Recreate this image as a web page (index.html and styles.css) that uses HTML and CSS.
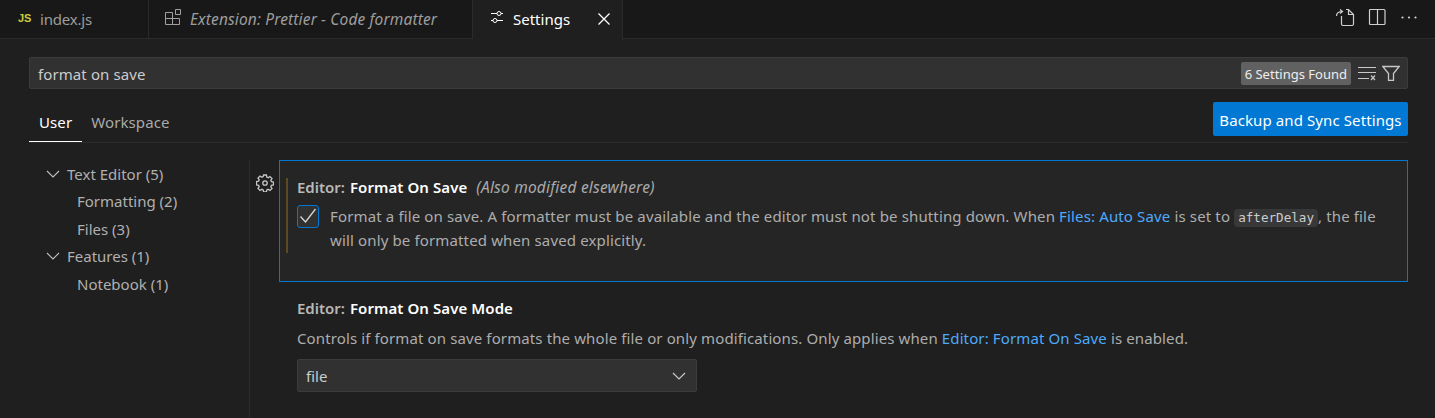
FILE: index.html
```html
<!DOCTYPE html>
<html lang="en">
<head>
<meta charset="utf-8">
<title>Settings</title>
<link rel="stylesheet" href="styles.css">
</head>
<body>
<header class="tabbar">
  <div class="tab tab-js"><span class="js-icon">JS</span><span class="tab-label">index.js</span></div>
  <div class="tab tab-ext">
    <svg class="ic16" viewBox="0 0 16 16" fill="none" stroke="#a0a0a0" stroke-width="1"><path d="M.5 1.500h7v12h-7zM.5 7.500h14v6h-7M10.500-1.500h5v5h-5z"/></svg>
    <span class="tab-label italic">Extension: Prettier - Code formatter</span>
  </div>
  <div class="tab tab-active">
    <svg class="ic16" viewBox="0 0 16 16" fill="none" stroke="#fff" stroke-width="1"><path d="M1 2.500h6M11 2.500h2M1 9.500h2M7 9.500h6"/><circle cx="9" cy="2.500" r="2"/><circle cx="5" cy="9.500" r="2"/></svg>
    <span class="tab-label">Settings</span>
    <svg class="close" viewBox="0 0 16 16" fill="none" stroke="#fff" stroke-width="1.300"><path d="M2.500 2.500l11 11M13.500 2.500l-11 11"/></svg>
  </div>
  <div class="tab-fill">
    <svg class="act" viewBox="0 0 20 20" fill="none" stroke="#d0d0d0" stroke-width="1.200"><path d="M6.500 9v8a1.500 1.500 0 0 0 1.500 1.500h9a1.500 1.500 0 0 0 1.500-1.500V7.500l-5-5H11M13.500 2.500v5h5M1.500 9c0-3 2-4.500 6-4.500M5 2.500l2.500 2-2.500 2"/></svg>
    <svg class="act" viewBox="0 0 20 20" fill="none" stroke="#d0d0d0" stroke-width="1.200"><rect x="2.500" y="2.500" width="15.500" height="15" rx="1"/><path d="M10.500 2.500v15"/></svg>
    <svg class="act" viewBox="0 0 20 20" fill="#d0d0d0"><circle cx="3.500" cy="10.500" r="1.100"/><circle cx="10" cy="10.500" r="1.100"/><circle cx="16.500" cy="10.500" r="1.100"/></svg>
  </div>
</header>

<main class="editor">
  <div class="search">
    <span class="search-text">format on save</span>
    <span class="badge">6 Settings Found</span>
    <svg class="ic-search" viewBox="0 0 18 16" fill="none" stroke="#c8c8c8" stroke-width="1.200"><path d="M0 2.500h18M0 7.500h18M0 13.500h11M13 10.500l4 4.500M17 10.500l-4 4.500"/></svg>
    <svg class="ic-search ic-funnel" viewBox="0 0 18 16" fill="none" stroke="#c8c8c8" stroke-width="1.300"><path d="M.8 1.500h16.400L11.500 8.500v7h-5v-7z"/></svg>
  </div>

  <div class="scopebar">
    <div class="scopes">
      <span class="scope scope-active">User</span>
      <span class="scope scope-next">Workspace</span>
    </div>
    <button class="sync">Backup and Sync Settings</button>
  </div>

  <div class="body">
    <nav class="toc">
      <div class="toc-row toc-top"><svg class="chev" viewBox="0 0 16 16" fill="none" stroke="#c0c0c0" stroke-width="1.100"><path d="M2 5l6 6 6-6"/></svg>Text Editor (5)</div>
      <div class="toc-row toc-sub">Formatting (2)</div>
      <div class="toc-row toc-sub">Files (3)</div>
      <div class="toc-row toc-top"><svg class="chev" viewBox="0 0 16 16" fill="none" stroke="#c0c0c0" stroke-width="1.100"><path d="M2 5l6 6 6-6"/></svg>Features (1)</div>
      <div class="toc-row toc-sub">Notebook (1)</div>
    </nav>

    <section class="list">
      <div class="gutter">
        <svg class="gear" viewBox="0 0 18 18" fill="none" stroke="#c8c8c8" stroke-width="1.300"><path d="M7.600 1h2.800l.4 2.100 1.400.6 1.800-1.200 2 2-1.200 1.800.6 1.400 2.100.4v2.800l-2.100.4-.6 1.400 1.200 1.800-2 2-1.800-1.200-1.400.6-.4 2.100H7.600l-.4-2.100-1.400-.6L4 16.500l-2-2 1.200-1.800-.6-1.400-2.100-.4V7.600l2.100-.4.6-1.400L2 4l2-2 1.800 1.200 1.400-.6z"/><circle cx="9" cy="9" r="2.200"/></svg>
      </div>
      <div class="settings">
        <article class="setting setting-focus">
          <div class="modified"></div>
          <div class="title"><span class="cat">Editor: </span><span class="name">Format On Save</span><em class="also">(Also modified elsewhere)</em></div>
          <div class="check-row">
            <span class="checkbox"><svg viewBox="0 0 20 20" fill="none" stroke="#d8d8d8" stroke-width="1.300"><path d="M2.500 10.500l5 5.500 10-13"/></svg></span>
            <p class="desc">Format a file on save. A formatter must be available and the editor must not be shutting down. When <a class="link">Files: Auto Save</a> is set to <code class="code">afterDelay</code>, the file will only be formatted when saved explicitly.</p>
          </div>
        </article>
        <article class="setting setting-plain">
          <div class="title"><span class="cat">Editor: </span><span class="name">Format On Save Mode</span></div>
          <p class="desc desc-mode">Controls if format on save formats the whole file or only modifications. Only applies when <a class="link">Editor: Format On Save</a> is enabled.</p>
          <div class="select"><span>file</span><svg class="ic16" viewBox="0 0 16 16" fill="none" stroke="#c8c8c8" stroke-width="1.200"><path d="M2 5l6 6 6-6"/></svg></div>
        </article>
      </div>
    </section>
  </div>
</main>
</body>
</html>
```
FILE: styles.css
```css
* { box-sizing: border-box; }
html, body { margin: 0; height: 100%; overflow: hidden; }
body {
  width: 1435px;
  height: 418px;
  background: #1f1f1f;
  color: #ccc;
  font-family: "Noto Sans", "Open Sans", "Liberation Sans", sans-serif;
  font-size: 15px;
}
.tabbar {
  display: flex;
  height: 39px;
  background: #181818;
}
.tab {
  display: flex;
  align-items: center;
  height: 39px;
  border-right: 1px solid #2b2b2b;
  border-bottom: 1px solid #2b2b2b;
  color: #9d9d9d;
  font-size: 15px;
}
.tab-js { width: 149px; padding-left: 18px; }
.tab-ext { width: 324px; padding-left: 16px; }
.tab-active {
  width: 150px;
  height: 40px;
  padding: 0 0 2px 17px;
  background: #1f1f1f;
  color: #fff;
  border-bottom: 0;
}
.js-icon {
  width: 22px;
  color: #cbcb41;
  font-weight: 700;
  font-size: 11px;
  margin-top: -2px;
  font-family: "Liberation Sans", sans-serif;
}
.tab-label { white-space: nowrap; }
.tab-js .tab-label { letter-spacing: -0.2px; }
.italic { font-style: italic; margin-left: 9px; font-size: 15.5px; letter-spacing: 0.14px; }
.tab-active .tab-label { margin-left: 7px; }
.ic16 { width: 16px; height: 16px; flex: none; overflow: visible; }
.close { width: 16px; height: 16px; margin-left: 26px; }
.tab-fill {
  flex: 1;
  display: flex;
  justify-content: flex-end;
  align-items: center;
  gap: 12px;
  height: 39px;
  padding: 0 16px 5px 0;
  border-bottom: 1px solid #2b2b2b;
}
.act { width: 20px; height: 20px; }
.editor { padding: 18px 27px 0 29px; }
.search {
  display: flex;
  align-items: center;
  height: 32px;
  padding: 0 7px 0 8px;
  background: #313131;
  border: 1px solid #3c3c3c;
  border-radius: 2px;
}
.search-text { flex: 1; font-size: 15px; color: #ccc; letter-spacing: 0.1px; padding-top: 1px; }
.badge {
  height: 23px;
  line-height: 25px;
  padding: 0 4px;
  margin-right: 7px;
  background: #616161;
  color: #eee;
  border-radius: 2px;
  font-size: 13px;
  white-space: nowrap;
}
.ic-search { width: 18px; height: 16px; flex: none; }
.ic-funnel { margin-left: 6px; }
.scopebar {
  display: flex;
  justify-content: space-between;
  align-items: flex-start;
  height: 41px;
  margin-top: 13px;
  border-bottom: 1px solid #2b2b2b;
}
.scopes { display: flex; }
.scope {
  padding: 0 10px;
  height: 40px;
  line-height: 40px;
  color: #aaa;
  font-size: 15px;
  letter-spacing: 0.1px;
}
.scope-next { margin-left: -1px; }
.scope-active { color: #fff; border-bottom: 1px solid #fff; }
.sync {
  width: 195px;
  height: 34px;
  padding: 2px 0 0;
  border: 0;
  border-radius: 2px;
  background: #0078d4;
  color: #fff;
  font: 15px "Noto Sans", "Open Sans", sans-serif;
  letter-spacing: 0.1px;
  white-space: nowrap;
}
.body { display: flex; margin-top: 17px; height: 258px; }
.toc { width: 221px; border-right: 1px solid #2b2b2b; padding-left: 16px; }
.toc-row {
  display: flex;
  align-items: center;
  height: 27.500px;
  color: #b0b0b0;
  font-size: 15px;
}
.toc-sub { padding-left: 32px; }
.chev { width: 16px; height: 16px; margin-right: 6px; }
.list { flex: 1; display: flex; }
.gutter { width: 29px; padding-left: 6px; padding-top: 14px; }
.gear { width: 18px; height: 18px; display: block; }
.settings { flex: 1; }
.setting { position: relative; }
.setting-focus {
  height: 122px;
  background: #252526;
  border: 1px solid #0078d4;
  padding: 16px 0 0 17px;
}
.modified {
  position: absolute;
  left: 6px;
  top: 17px;
  width: 2px;
  height: 75px;
  background: #5c4a20;
}
.title { height: 20px; line-height: 20px; font-size: 15px; font-weight: 600; color: #b8b8b8; }
.name { color: #fff; letter-spacing: 0.08px; margin-left: 1px; }
.also { font-weight: 400; font-size: 15.5px; margin-left: 9px; color: #aaa; letter-spacing: 0.2px; }
.check-row { display: flex; gap: 11px; margin-top: 8px; }
.checkbox {
  flex: none;
  width: 22px;
  height: 23px;
  background: #313131;
  border: 1px solid #0078d4;
  border-radius: 3px;
}
.checkbox svg { width: 20px; height: 20px; display: block; }
.desc { margin: -1px 0 0; font-size: 15px; line-height: 24px; color: #adadad; width: 1050px; letter-spacing: 0.14px; }
.link { color: #4daafc; }
.code {
  display: inline-block;
  height: 18px;
  font: 12.600px/18px "DejaVu Sans Mono", monospace;
  background: #383838;
  padding: 0 4px;
  border-radius: 4px;
  color: #ccc;
  letter-spacing: 0;
}
.setting-plain { padding: 16px 0 0 18px; }
.desc-mode { width: auto; margin-top: 8px; letter-spacing: 0.12px; }
.select {
  display: flex;
  align-items: center;
  justify-content: space-between;
  width: 400px;
  height: 33px;
  margin-top: 9px;
  padding: 0 9px 0 8px;
  background: #313131;
  border: 1px solid #3c3c3c;
  border-radius: 2px;
  color: #ccc;
  font-size: 15px;
}
```
